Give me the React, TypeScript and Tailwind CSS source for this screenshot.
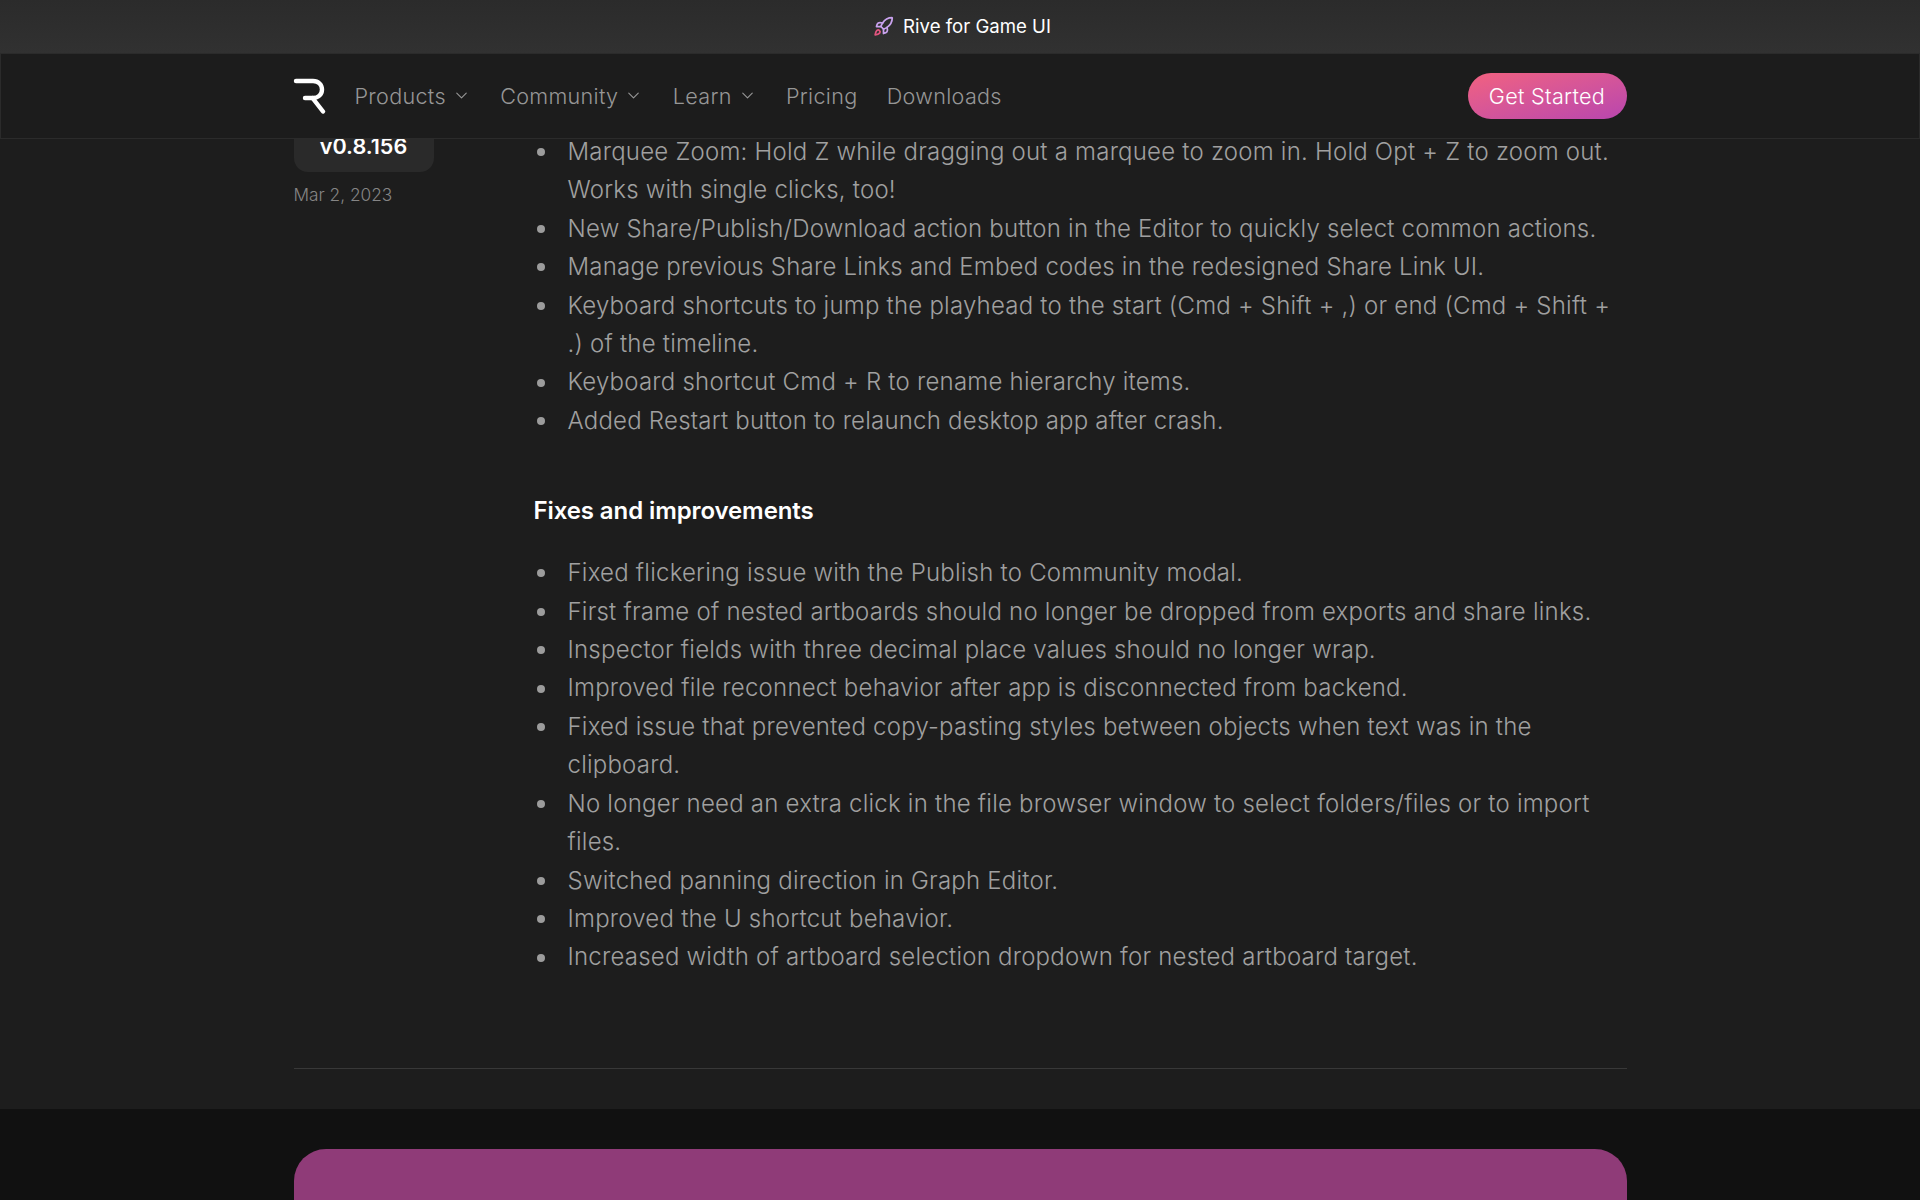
import { ChevronDown } from 'lucide-react';

const navItems = [
  { label: 'Products', menu: true },
  { label: 'Community', menu: true },
  { label: 'Learn', menu: true },
  { label: 'Pricing', menu: false },
  { label: 'Downloads', menu: false },
];

const newFeatures = [
  'Marquee Zoom: Hold Z while dragging out a marquee to zoom in. Hold Opt + Z to zoom out. Works with single clicks, too!',
  'New Share/Publish/Download action button in the Editor to quickly select common actions.',
  'Manage previous Share Links and Embed codes in the redesigned Share Link UI.',
  'Keyboard shortcuts to jump the playhead to the start (Cmd + Shift + ,) or end (Cmd + Shift + .) of the timeline.',
  'Keyboard shortcut Cmd + R to rename hierarchy items.',
  'Added Restart button to relaunch desktop app after crash.',
];

const fixes = [
  'Fixed flickering issue with the Publish to Community modal.',
  'First frame of nested artboards should no longer be dropped from exports and share links.',
  'Inspector fields with three decimal place values should no longer wrap.',
  'Improved file reconnect behavior after app is disconnected from backend.',
  'Fixed issue that prevented copy-pasting styles between objects when text was in the clipboard.',
  'No longer need an extra click in the file browser window to select folders/files or to import files.',
  'Switched panning direction in Graph Editor.',
  'Improved the U shortcut behavior.',
  'Increased width of artboard selection dropdown for nested artboard target.',
];

const RocketIcon = () => (
  <svg width="21" height="21" viewBox="0 0 24 24" fill="none" strokeWidth="2" strokeLinecap="round" strokeLinejoin="round">
    <path stroke="#e2557f" d="M4.5 16.5c-1.5 1.26-2 5-2 5s3.74-.5 5-2c.71-.84.7-2.13-.09-2.91a2.18 2.18 0 0 0-2.91-.09z" />
    <path stroke="#c9a2ee" d="m12 15-3-3a22 22 0 0 1 2-3.95A12.88 12.88 0 0 1 22 2c0 2.72-.78 7.5-6 11a22.35 22.35 0 0 1-4 2z" />
    <path stroke="#c9a2ee" d="M9 12H4s.55-3.03 2-4c1.62-1.08 5 0 5 0" />
    <path stroke="#c9a2ee" d="M12 15v5s3.03-.55 4-2c1.08-1.62 0-5 0-5" />
  </svg>
);

const Logo = () => (
  <svg width="33" height="36" viewBox="0 0 33 36" fill="none" stroke="white" strokeWidth="4.4" strokeLinecap="round" strokeLinejoin="round" className="-ml-[1px]">
    <path d="M3 3H20C25.5 3 29 6.8 29 11.5C29 16.2 25.5 20 20 20H12" />
    <path d="M19.5 20L30 33.5" />
  </svg>
);

const BulletList = ({ items }: { items: string[] }) => (
  <ul>
    {items.map((item) => (
      <li key={item} className="flex">
        <span className="flex h-[38.4px] w-[34px] shrink-0 items-center pl-[3px]">
          <span className="size-[8px] rounded-full bg-[#9c9c9c]" />
        </span>
        <span>{item}</span>
      </li>
    ))}
  </ul>
);

export default function App() {
  return (
    <div className="h-screen overflow-hidden bg-[#1d1d1d] font-['Inter',sans-serif]">
      <header className="relative z-10">
        <div className="flex h-[53px] items-center justify-center gap-[9px] bg-gradient-to-b from-[#2b2b2b] to-[#313131] pl-[4px] text-[18.6px] text-white">
          <RocketIcon />
          <span>Rive for Game UI</span>
        </div>
        <nav className="h-[86px] border border-[#2b2b2b] bg-[#1c1c1c]">
          <div className="mx-auto flex h-full w-[1333px] items-center justify-between">
            <div className="flex items-center">
              <Logo />
              <ul className="ml-[29px] flex items-center gap-[29.3px]">
                {navItems.map((item) => (
                  <li key={item.label} className="flex items-center gap-[6px] text-[21.6px] font-[350] tracking-[0.3px] text-[#969696]">
                    {item.label}
                    {item.menu && <ChevronDown size={19} strokeWidth={1.4} />}
                  </li>
                ))}
              </ul>
            </div>
            <button className="h-[46px] w-[159px] rounded-full bg-gradient-to-br from-[#f2617f] to-[#b945ae] text-[21.6px] font-[350] tracking-[0.3px] text-white">
              Get Started
            </button>
          </div>
        </nav>
      </header>

      <main className="-mt-[6px]">
        <div className="mx-auto flex w-[1333px]">
          <aside className="w-[240px] shrink-0">
            <div className="flex h-[39px] w-[140px] items-end justify-center rounded-b-[14px] bg-[#2a2a2a] pb-[14px] text-[21.6px] leading-none font-semibold text-white">
              v0.8.156
            </div>
            <p className="mt-[10px] text-[17.3px] font-[350] text-[#858585]">Mar 2, 2023</p>
          </aside>
          <div className="flex-1 text-2xl leading-[38.4px] font-[350] tracking-[0.22px] text-[#a0a0a0]">
            <BulletList items={newFeatures} />
            <h3 className="mt-[55px] mb-[27px] text-2xl font-semibold tracking-[-0.1px] text-white">Fixes and improvements</h3>
            <BulletList items={fixes} />
          </div>
        </div>
        <div className="mx-auto mt-[91px] h-px w-[1333px] bg-[#383838]" />
      </main>

      <footer className="mt-[40px] h-[300px] bg-[#111111] pt-[40px]">
        <div className="mx-auto h-[300px] w-[1333px] rounded-[32px] bg-[#8f3b78]" />
      </footer>
    </div>
  );
}
